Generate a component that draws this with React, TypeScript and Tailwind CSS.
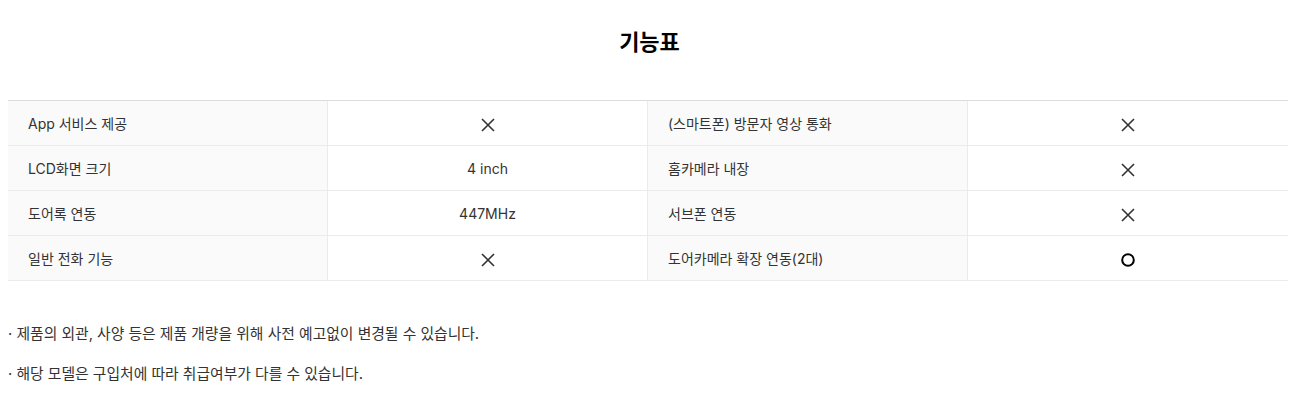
const rows: [string, string, string, string][] = [
  ["App 서비스 제공", "x", "(스마트폰) 방문자 영상 통화", "x"],
  ["LCD화면 크기", "4 inch", "홈카메라 내장", "x"],
  ["도어록 연동", "447MHz", "서브폰 연동", "x"],
  ["일반 전화 기능", "x", "도어카메라 확장 연동(2대)", "o"],
];

function Mark({ value }: { value: string }) {
  if (value === "x") {
    return (
      <svg width="16" height="16" viewBox="0 0 16 16" className="block mt-[4px]">
        <path d="M2 2 L14 14 M14 2 L2 14" stroke="#333" strokeWidth="1.6" fill="none" />
      </svg>
    );
  }
  if (value === "o") {
    return (
      <svg width="14" height="14" viewBox="0 0 14 14" className="block mt-[4px]">
        <circle cx="7" cy="7" r="5.8" stroke="#000" strokeWidth="2" fill="none" />
      </svg>
    );
  }
  return <span>{value}</span>;
}

export default function App() {
  return (
    <main
      className="min-h-screen bg-white px-2 text-[#333]"
      style={{ fontFamily: 'Inter, "Noto Sans CJK KR", sans-serif' }}
    >
      <h1 className="h-[100px] pt-[27px] text-center text-[22px] font-bold leading-[30px] text-black">
        기능표
      </h1>

      <div className="w-[1280px] border-t border-[#dcdcdc]">
        {rows.map((r, i) => (
          <div key={i} className="grid h-[45px] grid-cols-4 border-b border-[#ebebeb] text-[14px]">
            <div className="flex items-center border-r border-[#ebebeb] bg-[#fafafa] pl-5">{r[0]}</div>
            <div className="flex items-center justify-center border-r border-[#ebebeb]">
              <Mark value={r[1]} />
            </div>
            <div className="flex items-center border-r border-[#ebebeb] bg-[#fafafa] pl-5">{r[2]}</div>
            <div className="flex items-center justify-center">
              <Mark value={r[3]} />
            </div>
          </div>
        ))}
      </div>

      <div className="pt-[43px] text-[14.8px] leading-5">
        <p className="mb-5">· 제품의 외관, 사양 등은 제품 개량을 위해 사전 예고없이 변경될 수 있습니다.</p>
        <p>· 해당 모델은 구입처에 따라 취급여부가 다를 수 있습니다.</p>
      </div>
    </main>
  );
}
